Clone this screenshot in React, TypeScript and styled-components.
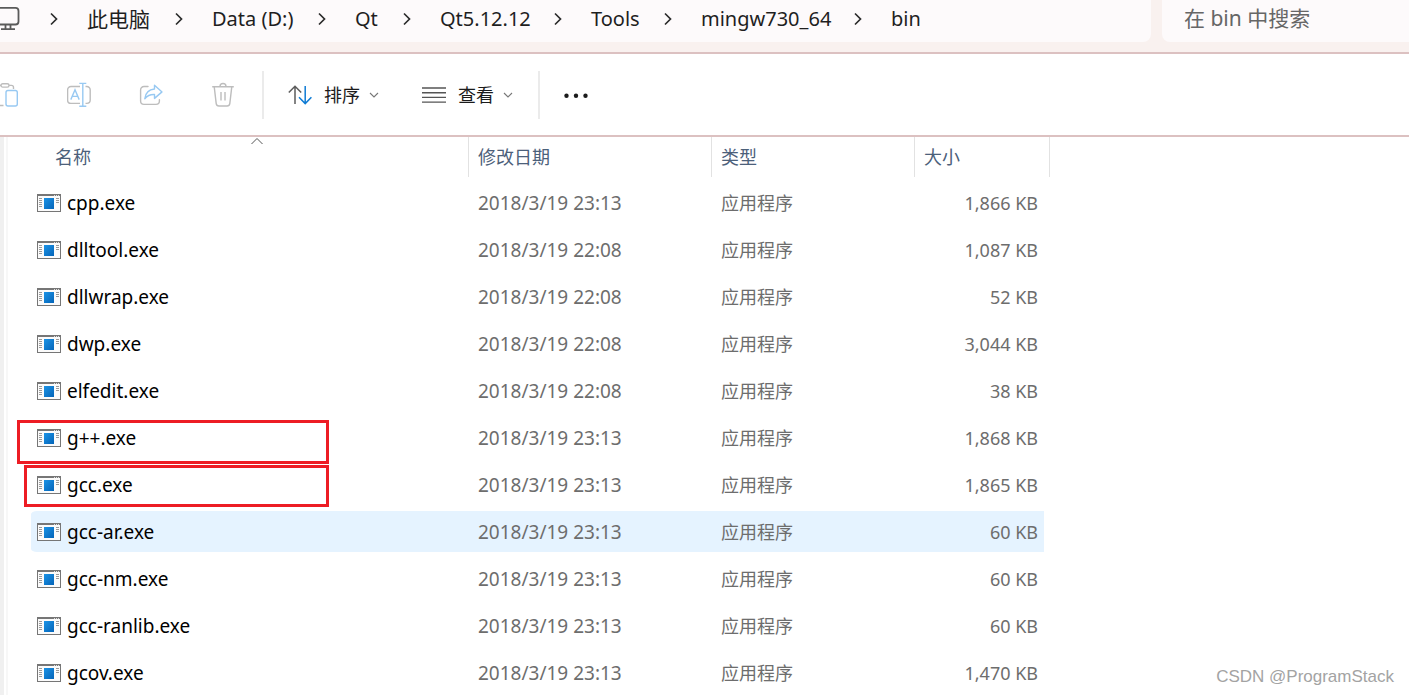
import React from "react";
import styled, { createGlobalStyle } from "styled-components";

const GlobalStyle = createGlobalStyle`
  * { box-sizing: border-box; }
  html, body, #root { height: 100%; }
  body {
    margin: 0;
    overflow: hidden;
    background: #fff;
    color: #1b1b1b;
    font-family: "Noto Sans", "Noto Sans CJK SC", sans-serif;
    font-size: 18px;
  }
  button, input { font: inherit; color: inherit; }
`;

const Window = styled.div`
  position: relative;
  display: flex;
  flex-direction: column;
  min-height: 100%;
`;

const AddressBar = styled.header`
  display: flex;
  gap: 11px;
  height: 54px;
  padding-bottom: 10px;
  background: #f9f1ef;
  border-bottom: 2px solid #dcc1c1;
`;

const Breadcrumbs = styled.nav`
  flex: 1;
  display: flex;
  align-items: center;
  min-width: 0;
  padding-bottom: 4px;
  background: #fdfafb;
  border-radius: 0 0 8px 0;
`;

const CrumbArrow = styled.svg`
  flex: none;
  width: 8px;
  height: 14px;
  margin: 0 29px 0 25px;
  fill: none;
  stroke: #2b2b2b;
  stroke-width: 1.7;
`;

const Crumb = styled.a<{ $width: number }>`
  flex: none;
  width: ${(p) => p.$width}px;
  font-size: ${(p) => (p.lang ? 21 : 20)}px;
  line-height: 30px;
  white-space: nowrap;
  color: #1f1f1f;
  text-decoration: none;
`;

const SearchField = styled.input`
  flex: 0 0 247px;
  width: 247px;
  padding: 0 12px 6px 22px;
  border: 0;
  border-radius: 0 0 0 8px;
  outline: 0;
  background: #fdfafb;
  font-size: 21px;
  &::placeholder { color: #666; opacity: 1; }
`;

const Toolbar = styled.div`
  display: flex;
  align-items: center;
  height: 83px;
  border-bottom: 2px solid #dcc1c1;
`;

const IconGroup = styled.div`
  display: flex;
  align-items: center;
  gap: 48px;
`;

const ToolButton = styled.button`
  display: flex;
  align-items: center;
  padding: 0;
  border: 0;
  background: none;
  line-height: 24px;
  svg { display: block; flex: none; }
`;

const ToolLabel = styled.span`
  margin: 0 9px 0 12px;
`;

const Menus = styled.div`
  display: flex;
  gap: 43px;
`;

const Divider = styled.span<{ $before: number }>`
  width: 2px;
  height: 48px;
  margin: 0 24px 0 ${(p) => p.$before}px;
  background: #ebebeb;
`;

const Content = styled.main`
  flex: 1;
  display: flex;
  background: #fff;
`;

const PaneEdge = styled.div`
  flex: none;
  width: 8px;
  margin-right: 23px;
  border-left: 4px solid #f0f0f0;
  border-right: 2px solid #f7f7f7;
`;

const FileTable = styled.table`
  table-layout: fixed;
  width: 1019px;
  align-self: flex-start;
  border-spacing: 0;
`;

const HeadCell = styled.th`
  position: relative;
  height: 42px;
  padding: 0 0 2px;
  font-weight: 400;
  text-align: left;
  color: #4c607a;
`;

const HeadLabel = styled.div<{ $indent: number }>`
  height: 40px;
  padding-left: ${(p) => p.$indent}px;
  line-height: 41px;
  border-right: 1px solid #e2e2e2;
`;

const SortMark = styled.svg`
  position: absolute;
  top: 0;
  left: 220px;
  fill: none;
  stroke: #555;
`;

const Cell = styled.td`
  position: relative;
  height: 47px;
  padding: 0 0 0 9px;
  border: solid transparent;
  border-width: 3px 0;
  background-clip: padding-box;
  line-height: 24px;
  color: #6d6d6d;
`;

const NameCell = styled(Cell)`
  padding-left: 6px;
  font-size: 19px;
  color: #000;
  border-radius: 6px 0 0 6px;
`;

const DateCell = styled(Cell)`
  font-size: 19px;
`;

const SizeCell = styled(Cell)`
  padding: 0 6px 0 0;
  border-right-width: 6px;
  text-align: right;
`;

const Row = styled.tr<{ $hovered?: boolean }>`
  ${Cell} { background-color: ${(p) => (p.$hovered ? "#e5f3ff" : "transparent")}; }
`;

const FileName = styled.span`
  display: flex;
  align-items: center;
  gap: 6px;
`;

const RedFrame = styled.span<{ $left: number; $top: number; $width: number; $height: number }>`
  position: absolute;
  z-index: 1;
  left: ${(p) => p.$left}px;
  top: ${(p) => p.$top}px;
  width: ${(p) => p.$width}px;
  height: ${(p) => p.$height}px;
  border: 3px solid #ed1c24;
  pointer-events: none;
`;

const Watermark = styled.span`
  position: absolute;
  right: 15px;
  bottom: 9px;
  font-family: "Liberation Sans", Arial, sans-serif;
  font-size: 17px;
  line-height: 20px;
  color: #a3a3a3;
`;

const MonitorIcon = () => (
  <svg width="25" height="26" viewBox="0 0 25 26" fill="none" stroke="#5a5a5a" strokeWidth="1.8">
    <path d="M-6 1.9H15.5a3 3 0 0 1 3 3V15.5a3 3 0 0 1-3 3H-6M5.5 18.5V22.6M10.5 18.5V22.6M1 23.2H15" />
  </svg>
);

const PasteIcon = () => (
  <svg width="19" height="26" viewBox="0 0 19 26" fill="none" strokeWidth="1.4">
    <g stroke="#bdbdbd">
      <rect x="1" y="1.7" width="8" height="3.4" rx="1.7" />
      <path d="M9 3.4H11.5a2 2 0 0 1 2 2V7M0 3.4H1M0 23.5H3.5" />
    </g>
    <rect x="6" y="8.5" width="11.3" height="15.5" rx="2" stroke="#98c9f2" />
  </svg>
);

const RenameIcon = () => (
  <svg width="24" height="26" viewBox="0 0 24 26" fill="none" strokeWidth="1.4">
    <path d="M13 4.5H4a3.4 3.4 0 0 0-3.4 3.4V18A3.4 3.4 0 0 0 4 21.4h9M18.5 4.5h1.3a3.4 3.4 0 0 1 3.4 3.4V18a3.4 3.4 0 0 1-3.4 3.4h-1.3" stroke="#bdbdbd" />
    <path d="M12.3 1.4h7M12.3 24.3h7M15.8 1.4v22.9M3.8 17.6 8 7.8l4.2 9.8M5.3 14.4h5.4" stroke="#98c9f2" />
  </svg>
);

const ShareIcon = () => (
  <svg width="24" height="26" viewBox="0 0 24 26" fill="none" strokeWidth="1.4" strokeLinejoin="round">
    <path d="M9 4.5H5a3.4 3.4 0 0 0-3.4 3.4V19A3.4 3.4 0 0 0 5 22.4h12a3.4 3.4 0 0 0 3.4-3.4v-1.2" stroke="#bdbdbd" strokeLinecap="round" />
    <path d="M15.5 3.2 23 9.9 15.5 16.4v-3.9c-4-.2-7.3 1.2-9.7 4.2.6-5.6 4.3-9.2 9.7-9.7z" stroke="#98c9f2" />
  </svg>
);

const TrashIcon = () => (
  <svg width="24" height="26" viewBox="0 0 24 26" fill="none" stroke="#bdbdbd" strokeWidth="1.4">
    <path d="M1.2 4.7H22.8M9 4.5a3 3 0 0 1 6 0M3.2 4.7 5.2 21.6a2.8 2.8 0 0 0 2.7 2.4h8.2a2.8 2.8 0 0 0 2.7-2.4L20.8 4.7M10 10v8.6M14 10v8.6" />
  </svg>
);

const SortIcon = () => (
  <svg width="24" height="22" viewBox="0 0 24 22" fill="none" strokeWidth="1.5">
    <path d="M7 20V2.5M.8 8.5 7 2.2l6.2 6.3" stroke="#5c5c5c" />
    <path d="M17.2 2v17.5M11 13.3l6.2 6.3 6.2-6.3" stroke="#0f7bd4" />
  </svg>
);

const ViewIcon = () => (
  <svg width="24" height="22" viewBox="0 0 24 22" fill="none" stroke="#555" strokeWidth="1.4">
    <path d="M0 4h24M0 8.7h24M0 13.4h24M0 18.1h24" />
  </svg>
);

const DownArrow = () => (
  <svg width="10" height="8" viewBox="0 0 10 8" fill="none" stroke="#777" strokeWidth="1.1">
    <path d="M1 2l4 4 4-4" />
  </svg>
);

const MoreIcon = () => (
  <svg width="24" height="6" viewBox="0 0 24 6" fill="#1b1b1b">
    <circle cx="2.5" cy="3.8" r="2.2" />
    <circle cx="12" cy="3.8" r="2.2" />
    <circle cx="21.5" cy="3.8" r="2.2" />
  </svg>
);

const ExeIcon = () => (
  <svg width="24" height="18" viewBox="0 0 24 18">
    <defs>
      <linearGradient id="exeBlue" x1="0" y1="0" x2="1" y2="1">
        <stop offset="0" stopColor="#1b93e6" />
        <stop offset="1" stopColor="#0464b8" />
      </linearGradient>
    </defs>
    <rect x=".5" y=".5" width="23" height="17" fill="#fbfbfb" stroke="#767676" />
    <path d="M0 1h24" stroke="#767676" strokeWidth="2" />
    <path d="M17 1.5h1M19 1.5h1M21 1.5h1" stroke="#ddd" />
    <path d="M2 4.5h3M2 6.5h3M2 8.5h3M2 10.5h3M2 12.5h3M19 4.5h3M19 6.5h3M19 8.5h3" stroke="#9a9a9a" />
    <rect x="7" y="4" width="10" height="11" fill="url(#exeBlue)" />
  </svg>
);

const crumbs = [
  { text: "此电脑", width: 63, lang: "zh" },
  { text: "Data (D:)", width: 81 },
  { text: "Qt", width: 23 },
  { text: "Qt5.12.12", width: 89 },
  { text: "Tools", width: 48 },
  { text: "mingw730_64", width: 128 },
  { text: "bin", width: 30 },
];

interface Frame { left: number; top: number; width: number; height: number }
interface FileItem { name: string; date: string; size: string; hovered?: boolean; frame?: Frame }

const files: FileItem[] = [
  { name: "cpp.exe", date: "2018/3/19 23:13", size: "1,866 KB" },
  { name: "dlltool.exe", date: "2018/3/19 22:08", size: "1,087 KB" },
  { name: "dllwrap.exe", date: "2018/3/19 22:08", size: "52 KB" },
  { name: "dwp.exe", date: "2018/3/19 22:08", size: "3,044 KB" },
  { name: "elfedit.exe", date: "2018/3/19 22:08", size: "38 KB" },
  { name: "g++.exe", date: "2018/3/19 23:13", size: "1,868 KB", frame: { left: -14, top: 3, width: 312, height: 44 } },
  { name: "gcc.exe", date: "2018/3/19 23:13", size: "1,865 KB", frame: { left: -7, top: 1, width: 305, height: 42 } },
  { name: "gcc-ar.exe", date: "2018/3/19 23:13", size: "60 KB", hovered: true },
  { name: "gcc-nm.exe", date: "2018/3/19 23:13", size: "60 KB" },
  { name: "gcc-ranlib.exe", date: "2018/3/19 23:13", size: "60 KB" },
  { name: "gcov.exe", date: "2018/3/19 23:13", size: "1,470 KB" },
];

export default function App() {
  return (
    <Window>
      <GlobalStyle />
      <AddressBar>
        <Breadcrumbs>
          <MonitorIcon />
          {crumbs.map((c) => (
            <React.Fragment key={c.text}>
              <CrumbArrow viewBox="0 0 8 14"><path d="M1 1.5 6.5 7 1 12.5" /></CrumbArrow>
              <Crumb href="#" lang={c.lang} $width={c.width}>{c.text}</Crumb>
            </React.Fragment>
          ))}
        </Breadcrumbs>
        <SearchField type="search" placeholder="在 bin 中搜索" aria-label="在 bin 中搜索" />
      </AddressBar>

      <Toolbar>
        <IconGroup>
          <ToolButton aria-label="粘贴"><PasteIcon /></ToolButton>
          <ToolButton aria-label="重命名"><RenameIcon /></ToolButton>
          <ToolButton aria-label="共享"><ShareIcon /></ToolButton>
          <ToolButton aria-label="删除"><TrashIcon /></ToolButton>
        </IconGroup>
        <Divider $before={27} />
        <Menus>
          <ToolButton><SortIcon /><ToolLabel>排序</ToolLabel><DownArrow /></ToolButton>
          <ToolButton><ViewIcon /><ToolLabel>查看</ToolLabel><DownArrow /></ToolButton>
        </Menus>
        <Divider $before={25} />
        <ToolButton aria-label="更多"><MoreIcon /></ToolButton>
      </Toolbar>

      <Content>
        <PaneEdge />
        <FileTable>
          <colgroup>
            <col style={{ width: 438 }} />
            <col style={{ width: 243 }} />
            <col style={{ width: 203 }} />
            <col style={{ width: 135 }} />
          </colgroup>
          <thead>
            <tr>
              <HeadCell>
                <HeadLabel $indent={24}>名称</HeadLabel>
                <SortMark width="12" height="8" viewBox="0 0 12 8"><path d="M.5 7 6 1.5 11.5 7" /></SortMark>
              </HeadCell>
              <HeadCell><HeadLabel $indent={9}>修改日期</HeadLabel></HeadCell>
              <HeadCell><HeadLabel $indent={9}>类型</HeadLabel></HeadCell>
              <HeadCell><HeadLabel $indent={9}>大小</HeadLabel></HeadCell>
            </tr>
          </thead>
          <tbody>
            {files.map((f) => (
              <Row key={f.name} $hovered={f.hovered}>
                <NameCell>
                  <FileName><ExeIcon />{f.name}</FileName>
                  {f.frame && (
                    <RedFrame $left={f.frame.left} $top={f.frame.top} $width={f.frame.width} $height={f.frame.height} />
                  )}
                </NameCell>
                <DateCell>{f.date}</DateCell>
                <Cell>应用程序</Cell>
                <SizeCell>{f.size}</SizeCell>
              </Row>
            ))}
          </tbody>
        </FileTable>
      </Content>
      <Watermark>CSDN @ProgramStack</Watermark>
    </Window>
  );
}
